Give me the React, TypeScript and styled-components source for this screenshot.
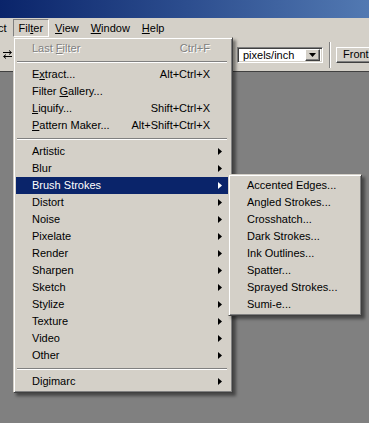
import styled, { createGlobalStyle } from 'styled-components'

type MenuEntry =
  | { kind: 'item'; label: string; key?: number; shortcut?: string; sub?: boolean; disabled?: boolean; active?: boolean }
  | { kind: 'sep' }

const filterMenu: MenuEntry[] = [
  { kind: 'item', label: 'Last Filter', key: 5, shortcut: 'Ctrl+F', disabled: true },
  { kind: 'sep' },
  { kind: 'item', label: 'Extract...', key: 1, shortcut: 'Alt+Ctrl+X' },
  { kind: 'item', label: 'Filter Gallery...', key: 7 },
  { kind: 'item', label: 'Liquify...', key: 0, shortcut: 'Shift+Ctrl+X' },
  { kind: 'item', label: 'Pattern Maker...', key: 0, shortcut: 'Alt+Shift+Ctrl+X' },
  { kind: 'sep' },
  { kind: 'item', label: 'Artistic', sub: true },
  { kind: 'item', label: 'Blur', sub: true },
  { kind: 'item', label: 'Brush Strokes', sub: true, active: true },
  { kind: 'item', label: 'Distort', sub: true },
  { kind: 'item', label: 'Noise', sub: true },
  { kind: 'item', label: 'Pixelate', sub: true },
  { kind: 'item', label: 'Render', sub: true },
  { kind: 'item', label: 'Sharpen', sub: true },
  { kind: 'item', label: 'Sketch', sub: true },
  { kind: 'item', label: 'Stylize', sub: true },
  { kind: 'item', label: 'Texture', sub: true },
  { kind: 'item', label: 'Video', sub: true },
  { kind: 'item', label: 'Other', sub: true },
  { kind: 'sep' },
  { kind: 'item', label: 'Digimarc', sub: true },
]

const brushStrokes = [
  'Accented Edges...',
  'Angled Strokes...',
  'Crosshatch...',
  'Dark Strokes...',
  'Ink Outlines...',
  'Spatter...',
  'Sprayed Strokes...',
  'Sumi-e...',
]

const menuBarItems = [
  { label: 'Select', key: 0 },
  { label: 'Filter', key: 3, open: true },
  { label: 'View', key: 0 },
  { label: 'Window', key: 0 },
  { label: 'Help', key: 0 },
]

const GlobalStyle = createGlobalStyle`
  html, body {
    margin: 0;
    padding: 0;
    background: #808080;
  }
`

const Screen = styled.div`
  position: relative;
  width: 369px;
  height: 423px;
  overflow: hidden;
  display: flex;
  flex-direction: column;
  background: #808080;
  font-family: 'Liberation Sans', Arial, sans-serif;
  font-size: 11px;
  color: #000;
`

const TitleBar = styled.div`
  height: 18px;
  flex-shrink: 0;
  background: linear-gradient(90deg, #0a246a 0%, #2c4d8e 50%, #5279b2 100%);
`

const MenuBar = styled.div`
  height: 20px;
  flex-shrink: 0;
  display: flex;
  align-items: flex-start;
  padding-top: 1px;
  box-sizing: border-box;
  background: #d4d0c8;
`

// the first item (Select) runs off the left edge of the shot
const MenuBarItem = styled.div<{ $open?: boolean; $clipped?: boolean }>`
  height: 18px;
  box-sizing: border-box;
  padding: 0 5px;
  line-height: 16px;
  white-space: nowrap;
  border: 1px solid;
  border-color: ${p => (p.$open ? '#808080 #fff #fff #808080' : 'transparent')};
  margin-left: ${p => (p.$clipped ? '-30px' : '0')};
`

const AccessKey = styled.span`
  text-decoration: underline;
  text-underline-offset: 1px;
`

const OptionsBar = styled.div`
  height: 34px;
  flex-shrink: 0;
  display: flex;
  align-items: center;
  padding-left: 2px;
  box-sizing: border-box;
  background: #d4d0c8;
  border-bottom: 1px solid #404040;
`

const SwapIcon = styled.svg`
  flex-shrink: 0;
  display: block;
`

const UnitSelect = styled.div`
  margin-left: 224px;
  width: 86px;
  height: 16px;
  flex-shrink: 0;
  box-sizing: border-box;
  display: flex;
  align-items: center;
  background: #fff;
  border: 1px solid;
  border-color: #808080 #fff #fff #808080;
  box-shadow: inset 1px 1px 0 #404040, inset -1px -1px 0 #d4d0c8;
  padding: 0 2px 0 5px;
`

const SelectText = styled.span`
  flex: 1;
  line-height: 12px;
`

const DropButton = styled.div`
  width: 15px;
  height: 12px;
  box-sizing: border-box;
  display: flex;
  align-items: center;
  justify-content: center;
  background: #d4d0c8;
  border: 1px solid;
  border-color: #fff #404040 #404040 #fff;
  box-shadow: inset -1px -1px 0 #808080;
`

const ToolSeparator = styled.div`
  width: 1px;
  height: 26px;
  flex-shrink: 0;
  margin: 0 5px 0 6px;
  background: #808080;
  border-right: 1px solid #fff;
`

const PushButton = styled.div`
  height: 16px;
  flex-shrink: 0;
  box-sizing: border-box;
  padding: 0 6px;
  line-height: 13px;
  white-space: nowrap;
  background: #d4d0c8;
  border: 1px solid;
  border-color: #fff #404040 #404040 #fff;
  box-shadow: inset -1px -1px 0 #808080;
`

const Workspace = styled.div`
  flex: 1;
  background: #808080;
`

const MenuPanel = styled.div<{ $width: number }>`
  position: absolute;
  width: ${p => p.$width}px;
  box-sizing: border-box;
  padding: 2px 4px 2px 2px;
  background: #d4d0c8;
  border: 1px solid;
  border-color: #d4d0c8 #404040 #404040 #d4d0c8;
  box-shadow: inset 1px 1px 0 #fff, inset -1px -1px 0 #808080, 3px 3px 3px rgba(0, 0, 0, 0.45);
  z-index: 10;
`

const FilterMenu = styled(MenuPanel)`
  top: 37px;
  left: 13px;
`

const SubMenu = styled(MenuPanel)`
  top: -3px;
  left: 100%;
  color: #000;
`

const Row = styled.div<{ $active?: boolean; $disabled?: boolean }>`
  position: relative;
  height: 17px;
  display: flex;
  align-items: center;
  padding: 0 6px 0 16px;
  line-height: 17px;
  white-space: nowrap;
  background: ${p => (p.$active ? '#0a246a' : 'transparent')};
  color: ${p => (p.$disabled ? '#808080' : p.$active ? '#fff' : '#000')};
  text-shadow: ${p => (p.$disabled ? '1px 1px 0 #fff' : 'none')};
`

const RowLabel = styled.span`
  flex: 1;
`

const Shortcut = styled.span`
  margin-right: 12px;
`

const Arrow = styled.svg`
  display: block;
  flex-shrink: 0;
`

const Separator = styled.div`
  height: 9px;
  display: flex;
  align-items: center;
  padding: 0 1px;

  &::before {
    content: '';
    flex: 1;
    height: 1px;
    background: #808080;
    border-bottom: 1px solid #fff;
  }
`

function Label({ text, keyIndex }: { text: string; keyIndex?: number }) {
  if (keyIndex === undefined) return <>{text}</>
  return (
    <>
      {text.slice(0, keyIndex)}
      <AccessKey>{text[keyIndex]}</AccessKey>
      {text.slice(keyIndex + 1)}
    </>
  )
}

function SubArrow({ color }: { color: string }) {
  return (
    <Arrow width="4" height="7" viewBox="0 0 4 7">
      <polygon points="0,0 4,3.5 0,7" fill={color} />
    </Arrow>
  )
}

export default function App() {
  return (
    <Screen>
      <GlobalStyle />
      <TitleBar />
      <MenuBar>
        {menuBarItems.map((m, i) => (
          <MenuBarItem key={m.label} $open={m.open} $clipped={i === 0}>
            <Label text={m.label} keyIndex={m.key} />
          </MenuBarItem>
        ))}
      </MenuBar>
      <OptionsBar>
        <SwapIcon width="11" height="9" viewBox="0 0 11 9">
          <path d="M1 2.5h8M7 0.5l2.5 2-2.5 2" stroke="#000" fill="none" strokeWidth="1" />
          <path d="M10 6.5h-8M4 4.5l-2.5 2 2.5 2" stroke="#000" fill="none" strokeWidth="1" />
        </SwapIcon>
        <UnitSelect>
          <SelectText>pixels/inch</SelectText>
          <DropButton>
            <svg width="7" height="4" viewBox="0 0 7 4">
              <polygon points="0,0 7,0 3.5,4" fill="#000" />
            </svg>
          </DropButton>
        </UnitSelect>
        <ToolSeparator />
        <PushButton>Front Image</PushButton>
      </OptionsBar>
      <Workspace />

      <FilterMenu $width={220}>
        {filterMenu.map((entry, i) => {
          if (entry.kind === 'sep') return <Separator key={`sep-${i}`} />
          return (
            <Row key={entry.label} $active={entry.active} $disabled={entry.disabled}>
              <RowLabel>
                <Label text={entry.label} keyIndex={entry.key} />
              </RowLabel>
              {entry.shortcut && <Shortcut>{entry.shortcut}</Shortcut>}
              {entry.sub && <SubArrow color={entry.active ? '#fff' : '#000'} />}
              {entry.active && (
                <SubMenu $width={134}>
                  {brushStrokes.map(name => (
                    <Row key={name}>
                      <RowLabel>{name}</RowLabel>
                    </Row>
                  ))}
                </SubMenu>
              )}
            </Row>
          )
        })}
      </FilterMenu>
    </Screen>
  )
}
